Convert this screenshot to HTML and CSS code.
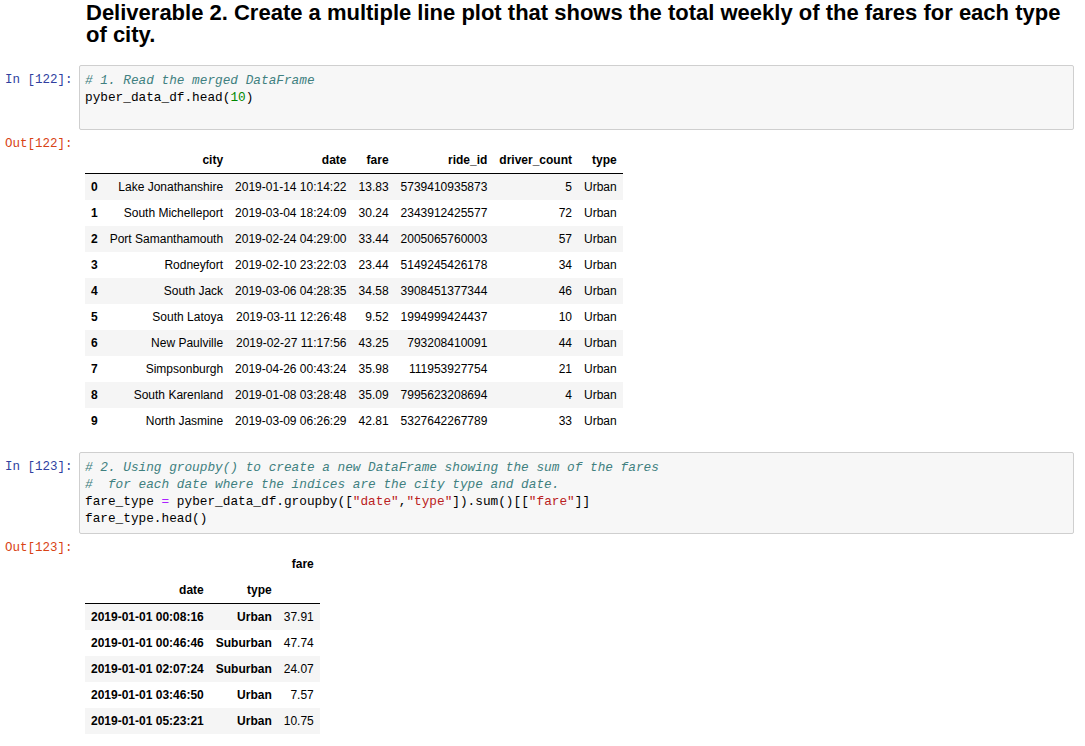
FILE: index.html
```html
<!DOCTYPE html>
<html>
<head>
<meta charset="utf-8">
<link rel="stylesheet" href="styles.css">
</head>
<body>
<div class="notebook">
  <div class="md-cell">
    <h2 class="title">Deliverable 2. Create a multiple line plot that shows the total weekly of the fares for each type of city.</h2>
  </div>

  <div class="cell">
    <div class="row">
      <div class="prompt in">In&nbsp;[122]:</div>
      <div class="input"><pre class="code"><span class="c"># 1. Read the merged DataFrame</span>
pyber_data_df.head(<span class="n">10</span>)
&#8203;</pre></div>
    </div>
    <div class="row out-row">
      <div class="prompt out">Out[122]:</div>
      <div class="output">
        <table class="df">
          <thead>
            <tr><th></th><th>city</th><th>date</th><th>fare</th><th>ride_id</th><th>driver_count</th><th>type</th></tr>
          </thead>
          <tbody>
            <tr><th>0</th><td>Lake Jonathanshire</td><td>2019-01-14 10:14:22</td><td>13.83</td><td>5739410935873</td><td>5</td><td>Urban</td></tr>
            <tr><th>1</th><td>South Michelleport</td><td>2019-03-04 18:24:09</td><td>30.24</td><td>2343912425577</td><td>72</td><td>Urban</td></tr>
            <tr><th>2</th><td>Port Samanthamouth</td><td>2019-02-24 04:29:00</td><td>33.44</td><td>2005065760003</td><td>57</td><td>Urban</td></tr>
            <tr><th>3</th><td>Rodneyfort</td><td>2019-02-10 23:22:03</td><td>23.44</td><td>5149245426178</td><td>34</td><td>Urban</td></tr>
            <tr><th>4</th><td>South Jack</td><td>2019-03-06 04:28:35</td><td>34.58</td><td>3908451377344</td><td>46</td><td>Urban</td></tr>
            <tr><th>5</th><td>South Latoya</td><td>2019-03-11 12:26:48</td><td>9.52</td><td>1994999424437</td><td>10</td><td>Urban</td></tr>
            <tr><th>6</th><td>New Paulville</td><td>2019-02-27 11:17:56</td><td>43.25</td><td>793208410091</td><td>44</td><td>Urban</td></tr>
            <tr><th>7</th><td>Simpsonburgh</td><td>2019-04-26 00:43:24</td><td>35.98</td><td>111953927754</td><td>21</td><td>Urban</td></tr>
            <tr><th>8</th><td>South Karenland</td><td>2019-01-08 03:28:48</td><td>35.09</td><td>7995623208694</td><td>4</td><td>Urban</td></tr>
            <tr><th>9</th><td>North Jasmine</td><td>2019-03-09 06:26:29</td><td>42.81</td><td>5327642267789</td><td>33</td><td>Urban</td></tr>
          </tbody>
        </table>
      </div>
    </div>
  </div>

  <div class="cell">
    <div class="row">
      <div class="prompt in">In&nbsp;[123]:</div>
      <div class="input"><pre class="code"><span class="c"># 2. Using groupby() to create a new DataFrame showing the sum of the fares</span>
<span class="c">#  for each date where the indices are the city type and date.</span>
fare_type <span class="o">=</span> pyber_data_df.groupby([<span class="s">"date"</span>,<span class="s">"type"</span>]).sum()[[<span class="s">"fare"</span>]]
fare_type.head()</pre></div>
    </div>
    <div class="row out-row">
      <div class="prompt out">Out[123]:</div>
      <div class="output">
        <table class="df">
          <thead>
            <tr><th></th><th></th><th>fare</th></tr>
            <tr><th>date</th><th>type</th><th></th></tr>
          </thead>
          <tbody>
            <tr><th>2019-01-01 00:08:16</th><th>Urban</th><td>37.91</td></tr>
            <tr><th>2019-01-01 00:46:46</th><th>Suburban</th><td>47.74</td></tr>
            <tr><th>2019-01-01 02:07:24</th><th>Suburban</th><td>24.07</td></tr>
            <tr><th>2019-01-01 03:46:50</th><th>Urban</th><td>7.57</td></tr>
            <tr><th>2019-01-01 05:23:21</th><th>Urban</th><td>10.75</td></tr>
          </tbody>
        </table>
      </div>
    </div>
  </div>
</div>
</body>
</html>
```

FILE: styles.css
```css
html, body {
  margin: 0;
  padding: 0;
  background: #ffffff;
}

body {
  font-family: "Liberation Sans", Arial, sans-serif;
  color: #000000;
  overflow: hidden;
}

.notebook {
  width: 1085px;
  padding-top: 2px;
}

.md-cell {
  padding-left: 86px;
  padding-right: 15px;
}

.title {
  margin: 0;
  font-family: "Liberation Sans", Arial, sans-serif;
  font-weight: bold;
  font-size: 22px;
  line-height: 22px;
  color: #000000;
}

.cell {
  margin-top: 19px;
  display: flex;
  flex-direction: column;
}

.cell + .cell {
  margin-top: 18px;
}

.row {
  display: flex;
  align-items: flex-start;
}

.prompt {
  width: 79px;
  flex: none;
  box-sizing: border-box;
  padding-left: 5px;
  font-family: "Liberation Mono", "DejaVu Sans Mono", monospace;
  font-size: 12.5px;
  line-height: 17px;
  white-space: nowrap;
}

.prompt.in {
  color: #303f9f;
  padding-top: 7px;
}

.prompt.out {
  color: #d84315;
}

.input {
  width: 995px;
  flex: none;
  box-sizing: border-box;
  background: #f7f7f7;
  border: 1px solid #cfcfcf;
  border-radius: 2px;
  padding: 6px 5px;
}

.code {
  margin: 0;
  font-family: "Liberation Mono", "DejaVu Sans Mono", monospace;
  font-size: 12.75px;
  line-height: 17px;
  color: #000000;
  white-space: pre;
}

.code .c { color: #408080; font-style: italic; }
.code .n { color: #008800; }
.code .o { color: #aa22ff; }
.code .s { color: #ba2121; }

.out-row {
  margin-top: 6px;
}

.output {
  padding-top: 11px;
  padding-left: 6px;
}

.df {
  border-collapse: collapse;
  border-spacing: 0;
  border: none;
  font-family: "Liberation Sans", Arial, sans-serif;
  font-size: 12px;
  line-height: 14px;
  color: #000000;
}

.df th, .df td {
  text-align: right;
  vertical-align: middle;
  padding: 6px;
  white-space: nowrap;
  border: none;
}

.df th {
  font-weight: bold;
}

.df thead {
  border-bottom: 1px solid #000000;
}

.df tbody tr:nth-child(odd) {
  background: #f5f5f5;
}
```
